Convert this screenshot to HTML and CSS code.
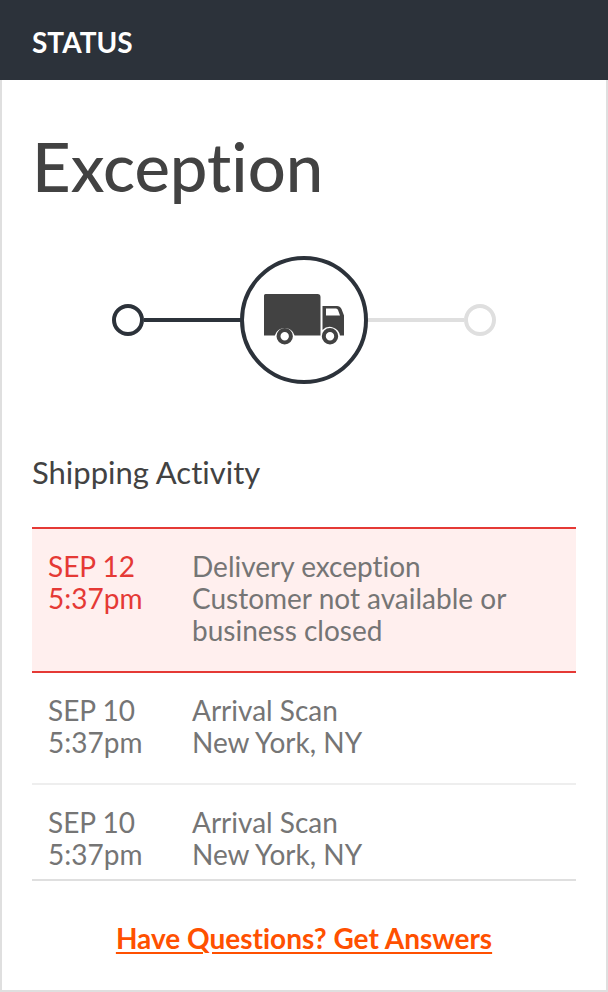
FILE: index.html
```html
<!DOCTYPE html>
<html lang="en">
<head>
  <meta charset="utf-8">
  <meta name="viewport" content="width=device-width, initial-scale=1">
  <title>Shipment status</title>
  <link rel="stylesheet" href="styles.css">
</head>
<body>
  <main class="card">
    <header class="card-header">
      <h2 class="card-title">STATUS</h2>
    </header>
    <div class="card-body">
      <h1 class="status">Exception</h1>
      <svg class="progress" viewBox="0 0 384 128" role="img" aria-label="In transit">
        <g fill="none" stroke-width="4">
          <path class="pending" d="M256 64H352"/>
          <circle class="pending" cx="368" cy="64" r="14"/>
          <path class="done" d="M32 64H130"/>
          <circle class="done" cx="16" cy="64" r="14"/>
          <circle class="done" cx="192" cy="64" r="62"/>
        </g>
        <g class="truck">
          <path d="M153.500 38H205.500Q208.500 38 208.500 41V79.500H182.600A10.300 10.300 0 0 0 162.800 79.500H152V39.500Q152 38 153.500 38Z"/>
          <path fill-rule="evenodd" d="M210.500 50H225Q228 50 229.500 53L232 59.500V79.500H228A10.300 10.300 0 0 0 210.500 74ZM214 52.500V59.500H228L226 54Q225.500 52.500 224 52.500Z"/>
          <circle class="wheel" cx="172.700" cy="80.300" r="6.200"/>
          <circle class="wheel" cx="218" cy="80.300" r="6.200"/>
        </g>
      </svg>
      <table class="activity">
        <caption>Shipping Activity</caption>
        <tbody>
          <tr class="alert">
            <th scope="row">SEP 12<br>5:37pm</th>
            <td>Delivery exception<br>Customer not available or business closed</td>
          </tr>
          <tr>
            <th scope="row">SEP 10<br>5:37pm</th>
            <td>Arrival Scan<br>New York, NY</td>
          </tr>
          <tr>
            <th scope="row">SEP 10<br>5:37pm</th>
            <td>Arrival Scan<br>New York, NY</td>
          </tr>
        </tbody>
      </table>
      <p class="help"><a href="#answers">Have Questions? Get Answers</a></p>
    </div>
  </main>
</body>
</html>
```

FILE: styles.css
```css
* {
  box-sizing: border-box;
}

body {
  margin: 0;
  background: #fff;
  color: #424242;
  font-family: Lato, "Liberation Sans", sans-serif;
  font-size: 28px;
  font-variant-ligatures: none;
  line-height: 32px;
}

.card-header {
  padding: 26px 32px 22px;
  background: #2c323a;
  color: #fff;
}

.card-title {
  margin: 0;
  font-size: 28px;
  font-weight: 700;
}

.card-body {
  padding: 46px 30px 36px;
  border: 2px solid #dfdfdf;
  border-top: 0;
}

.status {
  margin: 0;
  font-size: 67px;
  font-weight: 500;
  line-height: 80px;
}

.progress {
  display: block;
  width: 100%;
  max-width: 384px;
  margin: 50px auto 70px;
}

.done {
  stroke: #2c323a;
}

.pending {
  stroke: #dfdfdf;
}

.truck {
  fill: #424242;
}

.wheel {
  fill: none;
  stroke: #424242;
  stroke-width: 4;
}

.activity {
  width: 100%;
  border-collapse: separate;
  border-spacing: 0;
  table-layout: fixed;
  color: #757575;
}

.activity caption {
  padding-bottom: 37px;
  color: #424242;
  font-size: 31px;
  line-height: 36px;
  text-align: left;
}

.activity th,
.activity td {
  padding: 21px 0 25px;
  border-bottom: 2px solid #eee;
  font-weight: 400;
  text-align: left;
  vertical-align: top;
}

.activity th {
  width: 160px;
  padding-left: 16px;
}

.activity .alert th,
.activity .alert td {
  border-top: 2px solid #e53935;
  border-bottom-color: #e53935;
  background: #ffefee;
}

.activity .alert th {
  color: #e53935;
}

.activity tr:last-child th,
.activity tr:last-child td {
  padding-bottom: 9px;
  border-bottom-color: #dfdfdf;
}

.help {
  margin: 41px 0 0;
  text-align: center;
}

.help a {
  color: #ff5000;
  font-weight: 700;
  text-decoration-thickness: 2px;
  text-underline-offset: 3px;
}
```
